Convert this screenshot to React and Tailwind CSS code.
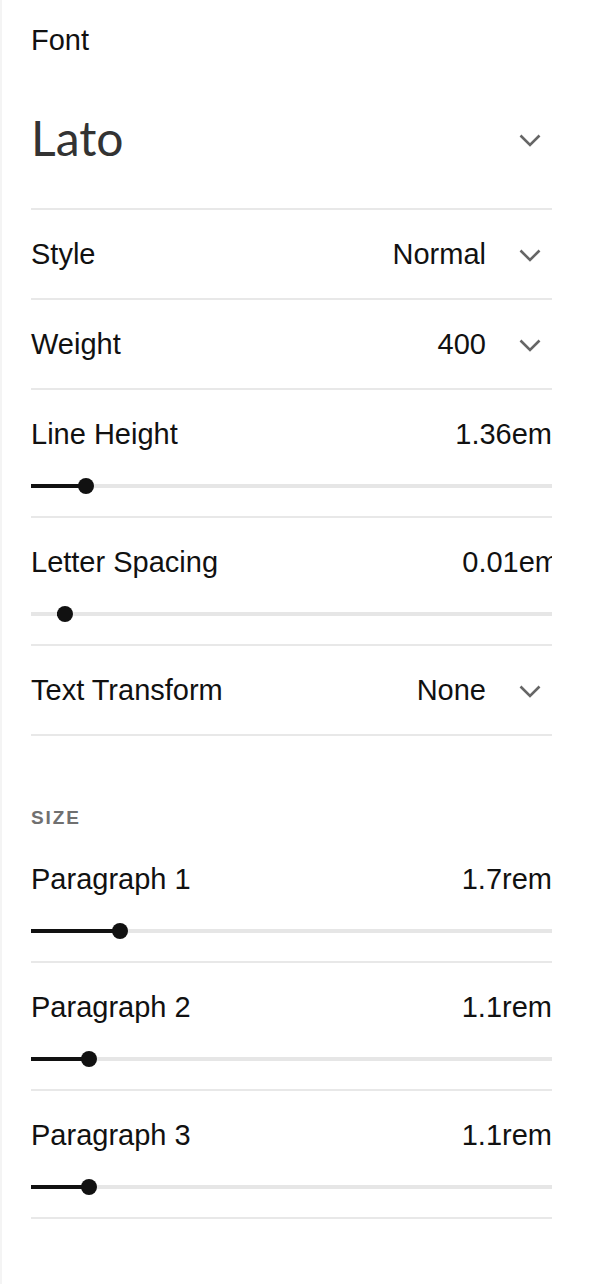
import React from 'react'

const font = { fontFamily: '"Liberation Sans", Arial, sans-serif' }

function Chevron() {
  return (
    <svg width="22" height="13" viewBox="0 0 22 13" fill="none" className="shrink-0">
      <polyline points="1.5,1.5 11,11 20.5,1.5" stroke="#666" strokeWidth="2.6" />
    </svg>
  )
}

function Divider() {
  return <div className="h-[2px] bg-[#e8e8e8]" />
}

function SelectRow({ label, value }) {
  return (
    <>
      <div className="h-[88px] pt-[2px] flex items-center justify-between text-[29px] text-[#111]">
        <span>{label}</span>
        <div className="flex items-center">
          <span>{value}</span>
          <span className="ml-[33px] mr-[11px] flex">
            <Chevron />
          </span>
        </div>
      </div>
      <Divider />
    </>
  )
}

function SliderRow({ label, value, from = 0, to, clip }) {
  return (
    <>
      <div className="h-[88px] pt-[2px] flex items-center justify-between text-[29px] text-[#111]">
        <span className="whitespace-nowrap">{label}</span>
        <div className="w-[130px] overflow-hidden flex justify-end">
          <span className={clip ? 'whitespace-nowrap mr-[-7px]' : 'whitespace-nowrap'}>{value}</span>
        </div>
      </div>
      <div className="relative h-[16px] flex items-center">
        <div className="w-full h-[4px] bg-[#e6e6e6]" />
        <div
          className="absolute top-[6px] h-[4px] bg-[#111]"
          style={{ left: from, width: to - from }}
        />
        <div
          className="absolute top-0 w-[16px] h-[16px] rounded-full bg-[#111]"
          style={{ left: to - 8 }}
        />
      </div>
      <div className="h-[22px]" />
      <Divider />
    </>
  )
}

export default function App() {
  return (
    <div className="min-h-[1284px] bg-white border-l-2 border-[#f4f4f4]" style={font}>
      <div className="ml-[29px] w-[521px]">
        <div className="h-[80px] pt-[2px] flex items-center text-[29px] text-[#111]">Font</div>
        <div className="h-[128px] flex items-center justify-between">
          <span className="text-[48px] mb-[12px] text-[#333]" style={{ fontFamily: 'Lato, sans-serif' }}>
            Lato
          </span>
          <span className="mr-[11px] mb-[8px] flex">
            <Chevron />
          </span>
        </div>
        <Divider />
        <SelectRow label="Style" value="Normal" />
        <SelectRow label="Weight" value="400" />
        <SliderRow label="Line Height" value="1.36em" to={55} />
        <SliderRow label="Letter Spacing" value="0.01em" from={26} to={34} clip />
        <SelectRow label="Text Transform" value="None" />
        <div className="h-[99px] pt-[71px]">
          <div className="text-[19px] leading-[22px] font-semibold tracking-[0.1em] text-[#707070]">SIZE</div>
        </div>
        <SliderRow label="Paragraph 1" value="1.7rem" to={89} />
        <SliderRow label="Paragraph 2" value="1.1rem" to={58} />
        <SliderRow label="Paragraph 3" value="1.1rem" to={58} />
      </div>
    </div>
  )
}
